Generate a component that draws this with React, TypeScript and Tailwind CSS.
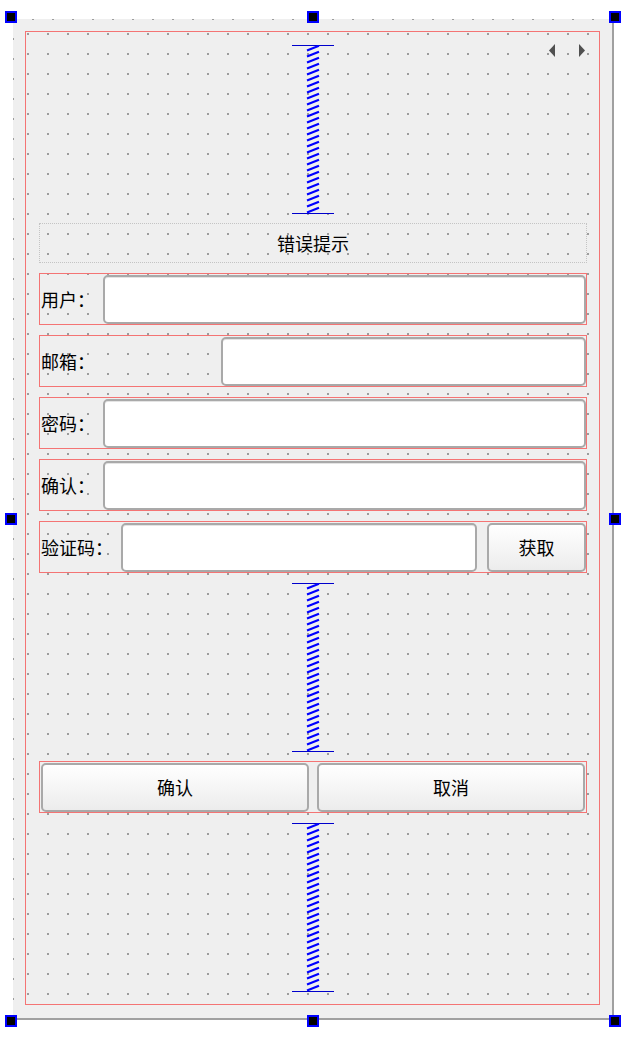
import React from "react";

const FONT = { fontFamily: '"Noto Sans CJK SC", "Noto Sans", sans-serif' };

function Spacer() {
  const strokes = [];
  for (let k = 0; k < 28; k++) {
    strokes.push(
      <line key={k} x1={15} y1={6 * k + 5.5} x2={27} y2={6 * k + 0.8} stroke="#0000ff" strokeWidth={2.2} />
    );
  }
  return (
    <div className="h-[168px] shrink-0 flex justify-center">
      <svg width="42" height="169" viewBox="0 0 42 169" className="block shrink-0">
        <line x1={0} y1={0.5} x2={42} y2={0.5} stroke="#0000cc" strokeWidth={1} />
        {strokes}
        <line x1={0} y1={168.5} x2={42} y2={168.5} stroke="#0000cc" strokeWidth={1} />
      </svg>
    </div>
  );
}

function Handle({ cls }: { cls: string }) {
  return <div className={"absolute w-[12px] h-[12px] bg-black border-2 border-[#0000ff] " + cls} />;
}

function Input() {
  return (
    <div className="flex-1 self-start mt-[1px] h-[49px] bg-white border-2 border-[#a9a9a9] rounded-[5px] shadow-[inset_0_1px_0_#e4e4e4]" />
  );
}

function Btn({ label, cls }: { label: string; cls: string }) {
  return (
    <div
      className={
        "self-start mt-[1px] h-[49px] flex items-center justify-center text-[18px] text-black border-2 border-[#a9a9a9] rounded-[5px] bg-[linear-gradient(to_bottom,#ffffff,#ececec)] " +
        cls
      }
    >
      {label}
    </div>
  );
}

function Row({ label, labelW, children }: { label: string; labelW: string; children: React.ReactNode }) {
  return (
    <div className="h-[52px] shrink-0 border border-[#f47474] flex items-stretch">
      <div className={"flex items-center pl-[1px] text-[18px] text-black shrink-0 " + labelW}>{label}</div>
      {children}
    </div>
  );
}

export default function App() {
  return (
    <div className="relative w-[640px] h-[1040px] bg-white overflow-hidden pl-[13px] pt-[19px]" style={FONT}>
      <div className="w-[601px] h-[1001px] border-r-2 border-b-2 border-[#a0a0a0] pt-[12px] pl-[12px] bg-[#9c9c9c] bg-[linear-gradient(to_right,transparent_2px,#efefef_2px),linear-gradient(to_bottom,transparent_2px,#efefef_2px)] bg-[length:20px_20px] bg-[position:-1px_-1px]">
        <div className="relative w-[575px] h-[974px] border border-[#f47474] pl-[13px] pr-[12px] pt-[13px] flex flex-col gap-[10px] bg-[#9c9c9c] bg-[linear-gradient(to_right,transparent_2px,#efefef_2px),linear-gradient(to_bottom,transparent_2px,#efefef_2px)] bg-[length:20px_20px] bg-[position:1px_1px]">
          <div className="absolute left-[523px] top-[12px]">
            <svg width="37" height="13" viewBox="0 0 37 13" className="block">
              <polygon points="6,0 0,6.5 6,13" fill="#505050" />
              <polygon points="30,0 36,6.5 30,13" fill="#505050" />
            </svg>
          </div>

          <Spacer />

          <div className="h-[40px] shrink-0 border border-dotted border-[#c4c4c4] flex items-center justify-center text-[18px] text-black">
            错误提示
          </div>

          <Row label="用户：" labelW="w-[63px]">
            <Input />
          </Row>
          <Row label="邮箱：" labelW="w-[181px]">
            <Input />
          </Row>
          <Row label="密码：" labelW="w-[63px]">
            <Input />
          </Row>
          <Row label="确认：" labelW="w-[63px]">
            <Input />
          </Row>
          <Row label="验证码：" labelW="w-[81px]">
            <div className="flex-1 flex gap-[10px]">
              <Input />
              <Btn label="获取" cls="w-[99px]" />
            </div>
          </Row>

          <Spacer />

          <div className="h-[52px] shrink-0 border border-[#f47474] flex gap-[8px] px-[1px]">
            <Btn label="确认" cls="flex-1" />
            <Btn label="取消" cls="flex-1" />
          </div>

          <Spacer />
        </div>
      </div>

      <Handle cls="left-[5px] top-[11px]" />
      <Handle cls="left-[307px] top-[11px]" />
      <Handle cls="left-[609px] top-[11px]" />
      <Handle cls="left-[5px] top-[513px]" />
      <Handle cls="left-[609px] top-[513px]" />
      <Handle cls="left-[5px] top-[1015px]" />
      <Handle cls="left-[307px] top-[1015px]" />
      <Handle cls="left-[609px] top-[1015px]" />
    </div>
  );
}
